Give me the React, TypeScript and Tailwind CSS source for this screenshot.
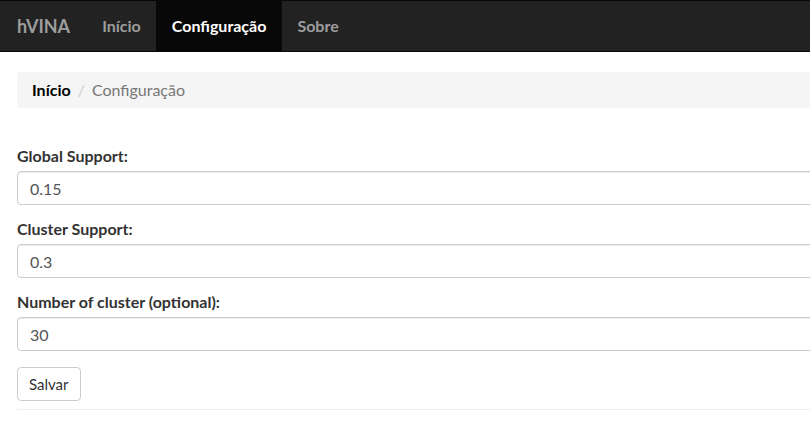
import React, { useState } from 'react';

const App: React.FC = () => {
  const [globalSupport, setGlobalSupport] = useState('0.15');
  const [clusterSupport, setClusterSupport] = useState('0.3');
  const [clusters, setClusters] = useState('30');

  const inputClass =
    'block w-full h-[34px] px-3 py-1.5 text-[16px] text-[#555] bg-white border border-[#ccc] rounded-[4px] shadow-[inset_0_1px_1px_rgba(0,0,0,0.075)] outline-none';

  return (
    <div className="w-[810px] h-[428px] overflow-hidden bg-white text-[16px] leading-[20px] text-[#333] font-['Lato','Liberation_Sans',sans-serif]">
      <nav className="h-[52px] bg-[#222] border-y border-[#080808]">
        <div className="w-[1140px] px-[17px] flex h-[50px]">
          <a className="h-[50px] flex items-center pr-[17px] text-[18px] text-[#9d9d9d] font-bold">hVINA</a>
          <ul className="flex">
            <li className="h-[50px] flex items-center px-[15px] text-[#9d9d9d] font-bold">Início</li>
            <li className="h-[50px] flex items-center px-[16px] bg-[#080808] text-white font-bold">Configuração</li>
            <li className="h-[50px] flex items-center px-[15px] text-[#9d9d9d] font-bold">Sobre</li>
          </ul>
        </div>
      </nav>

      <div className="w-[1140px] px-[17px] pt-[20px]">
        <ol className="flex items-center h-[36px] px-[15px] bg-[#f5f5f5] rounded-[4px]">
          <li className="font-bold text-black">Início</li>
          <li className="px-[7px] text-[#ccc]">/</li>
          <li className="text-[#777]">Configuração</li>
        </ol>

        <form className="mt-[38px]" onSubmit={(e) => e.preventDefault()}>
          <div className="mb-[14px]">
            <label className="block mb-[5px] font-bold">Global Support:</label>
            <input className={inputClass} value={globalSupport} onChange={(e) => setGlobalSupport(e.target.value)} />
          </div>
          <div className="mb-[14px]">
            <label className="block mb-[5px] font-bold">Cluster Support:</label>
            <input className={inputClass} value={clusterSupport} onChange={(e) => setClusterSupport(e.target.value)} />
          </div>
          <div className="mb-[16px]">
            <label className="block mb-[5px] font-bold">Number of cluster (optional):</label>
            <input className={inputClass} value={clusters} onChange={(e) => setClusters(e.target.value)} />
          </div>
          <button
            type="submit"
            className="h-[34px] px-[11px] bg-white border border-[#ccc] rounded-[4px] text-[15px] text-[#333]"
          >
            Salvar
          </button>
        </form>
        <hr className="mt-[8px] border-t border-[#eee]" />
      </div>
    </div>
  );
};

export default App;
